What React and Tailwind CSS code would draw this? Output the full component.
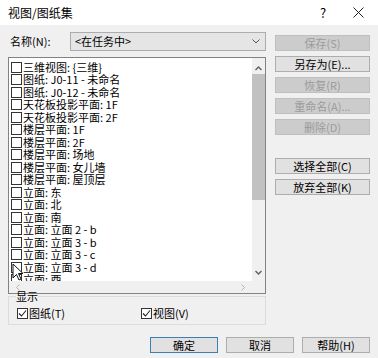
import React from 'react';

const views = [
    '三维视图: {三维}',
    '图纸: J0-11 - 未命名',
    '图纸: J0-12 - 未命名',
    '天花板投影平面: 1F',
    '天花板投影平面: 2F',
    '楼层平面: 1F',
    '楼层平面: 2F',
    '楼层平面: 场地',
    '楼层平面: 女儿墙',
    '楼层平面: 屋顶层',
    '立面: 东',
    '立面: 北',
    '立面: 南',
    '立面: 立面 2 - b',
    '立面: 立面 3 - b',
    '立面: 立面 3 - c',
    '立面: 立面 3 - d',
    '立面: 西',
];

const font = { fontFamily: '"Noto Sans CJK SC", "Liberation Sans", sans-serif' };

const Box = ({ checked }) => (
    <span className="w-[11px] h-[11px] border border-[#333] bg-white flex items-center justify-center shrink-0">
        {checked && (
            <svg width="9" height="9" viewBox="0 0 9 9">
                <path d="M1 4.5 L3.5 7 L8 1.5" fill="none" stroke="#222" strokeWidth="1.1" />
            </svg>
        )}
    </span>
);

const Btn = ({ children, disabled, primary, className = '' }) => (
    <div
        className={`h-[16px] flex items-center justify-center text-[11px] border ${
            disabled
                ? 'bg-[#cccccc] border-[#bfbfbf] text-[#9b9b9b]'
                : primary
                    ? 'bg-[#e1e1e1] border-[#3c7fb1] text-black'
                    : 'bg-[#e1e1e1] border-[#adadad] text-black'
        } ${className}`}
    >
        {children}
    </div>
);

const App = () => {
    return (
        <div className="w-[378px] h-[358px] bg-[#f0f0f0] flex flex-col text-black overflow-hidden" style={font}>
            {/* 标题栏 */}
            <div className="h-[25px] bg-white flex items-center pl-[8px] text-[12px]">
                <span>视图/图纸集</span>
                <span className="ml-auto w-[30px] text-center text-[13px]">?</span>
                <span className="w-[40px] flex justify-center">
                    <svg width="11" height="11" viewBox="0 0 11 11">
                        <path d="M0.5 0.5 L10.5 10.5 M10.5 0.5 L0.5 10.5" stroke="#222" strokeWidth="1" />
                    </svg>
                </span>
            </div>

            <div className="flex px-[8px]">
                {/* 左侧 */}
                <div className="w-[258px] flex flex-col">
                    <div className="flex items-center mt-[7px] h-[19px]">
                        <span className="w-[62px] pl-[2px] text-[11px]">名称(N):</span>
                        <div className="flex-1 h-[19px] bg-[#e5e5e5] border border-[#acacac] flex items-center pl-[4px] pr-[5px] text-[11px]">
                            <span>&lt;在任务中&gt;</span>
                            <svg className="ml-auto" width="8" height="5" viewBox="0 0 8 5">
                                <path d="M0.5 0.5 L4 4 L7.5 0.5" fill="none" stroke="#555" strokeWidth="1" />
                            </svg>
                        </div>
                    </div>

                    {/* 列表 */}
                    <div className="mt-[6px] h-[237px] border border-[#828282] bg-white flex flex-col">
                        <div className="flex flex-1 min-h-0">
                            <div className="flex-1 overflow-hidden pl-[2px] pt-[3px] relative">
                                {views.map((v) => (
                                    <div key={v} className="h-[12.5px] flex items-center gap-[1px] text-[11px] leading-none whitespace-nowrap">
                                        <Box />
                                        <span>{v}</span>
                                    </div>
                                ))}
                                <svg className="absolute left-[3px] top-[205px]" width="12" height="18" viewBox="0 0 12 18">
                                    <path d="M1 1 L1 15 L4.5 11.5 L7 17 L9 16 L6.5 10.5 L11 10.5 Z" fill="white" stroke="#111" strokeWidth="1" />
                                </svg>
                            </div>
                            <div className="w-[13px] bg-[#f0f0f0] flex flex-col items-center">
                                <svg className="mt-[8px]" width="7" height="5" viewBox="0 0 7 5">
                                    <path d="M0.5 4 L3.5 1 L6.5 4" fill="none" stroke="#606060" strokeWidth="1.4" />
                                </svg>
                                <div className="mt-[3px] w-[13px] h-[126px] bg-[#c1c1c1]" />
                                <svg className="mt-auto mb-[6px]" width="7" height="5" viewBox="0 0 7 5">
                                    <path d="M0.5 1 L3.5 4 L6.5 1" fill="none" stroke="#606060" strokeWidth="1.4" />
                                </svg>
                            </div>
                        </div>
                        <div className="h-[12px] bg-[#f0f0f0] flex items-center pl-[7px] pr-[20px] text-[#b5b5b5]">
                            <svg width="4" height="7" viewBox="0 0 4 7">
                                <path d="M3.5 0.5 L0.5 3.5 L3.5 6.5" fill="none" stroke="#b5b5b5" strokeWidth="1" />
                            </svg>
                            <svg className="ml-auto" width="4" height="7" viewBox="0 0 4 7">
                                <path d="M0.5 0.5 L3.5 3.5 L0.5 6.5" fill="none" stroke="#b5b5b5" strokeWidth="1" />
                            </svg>
                        </div>
                    </div>

                    {/* 显示 */}
                    <fieldset className="mt-[-3px] h-[34px] border border-[#dcdcdc] px-[8px]">
                        <legend className="text-[11px] leading-none ml-[-1px] px-0">显示</legend>
                        <div className="flex items-center text-[11px] mt-[3px]">
                            <div className="flex items-center gap-[1px] w-[124px]">
                                <Box checked />
                                <span>图纸(T)</span>
                            </div>
                            <div className="flex items-center gap-[1px]">
                                <Box checked />
                                <span>视图(V)</span>
                            </div>
                        </div>
                    </fieldset>
                </div>

                {/* 右侧按钮 */}
                <div className="w-[95px] ml-[9px] flex flex-col gap-[5px] pt-[10px]">
                    <Btn disabled>保存(S)</Btn>
                    <Btn>另存为(E)...</Btn>
                    <Btn disabled>恢复(R)</Btn>
                    <Btn disabled>重命名(A)...</Btn>
                    <Btn disabled>删除(D)</Btn>
                    <Btn className="mt-[18px]">选择全部(C)</Btn>
                    <Btn>放弃全部(K)</Btn>
                </div>
            </div>

            {/* 底部按钮 */}
            <div className="flex justify-end gap-[8px] pr-[8px] mt-[12px]">
                <Btn primary className="w-[68px]">确定</Btn>
                <Btn className="w-[68px]">取消</Btn>
                <Btn className="w-[68px]">帮助(H)</Btn>
            </div>
        </div>
    );
};

export default App;
